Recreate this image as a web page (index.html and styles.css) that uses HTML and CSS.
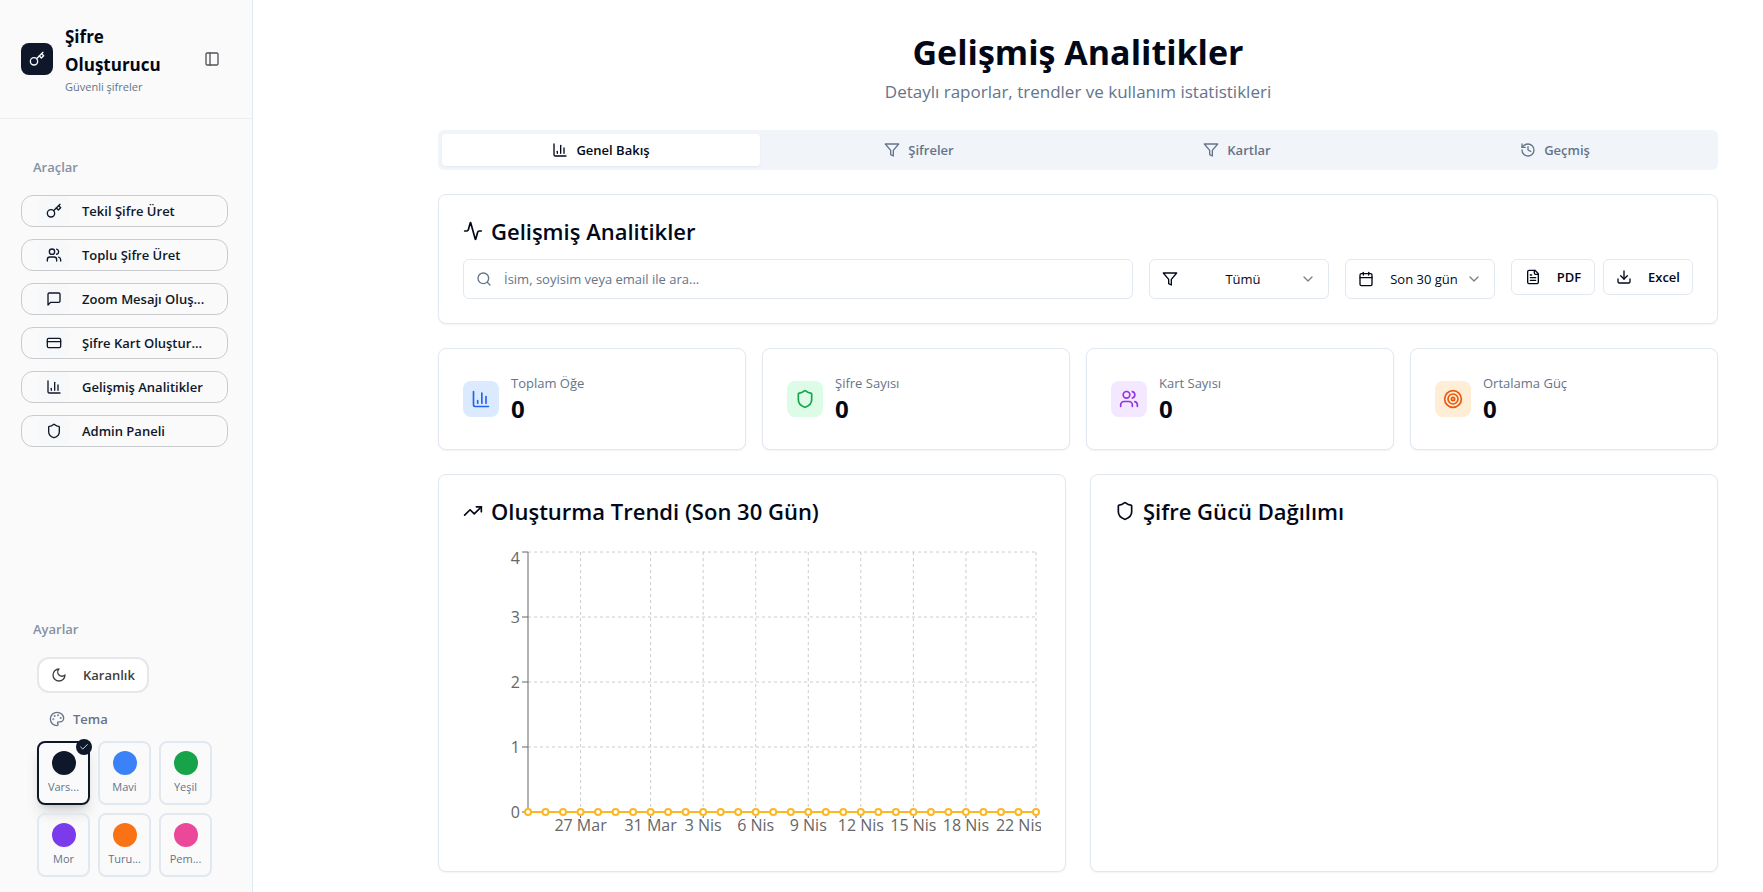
FILE: index.html
```html
<!DOCTYPE html>
<html lang="tr">
  <head>
    <meta charset="UTF-8" />
    <meta name="viewport" content="width=device-width, initial-scale=1.0" />
    <title>Gelişmiş Analitikler</title>
    <link rel="stylesheet" href="styles.css">
  </head>
  <body>
    <!-- Icon set -->
    <svg class="icon-set" aria-hidden="true">
      <symbol id="i-key" viewBox="0 0 24 24"><circle cx="7.5" cy="15.5" r="5.5" /><path d="m21 2-9.6 9.6" /><path d="m15.5 7.5 3 3L22 7l-3-3" /></symbol>
      <symbol id="i-panel" viewBox="0 0 24 24"><rect width="18" height="18" x="3" y="3" rx="2" /><path d="M9 3v18" /></symbol>
      <symbol id="i-users" viewBox="0 0 24 24"><path d="M16 21v-2a4 4 0 0 0-4-4H6a4 4 0 0 0-4 4v2" /><circle cx="9" cy="7" r="4" /><path d="M22 21v-2a4 4 0 0 0-3-3.87" /><path d="M16 3.13a4 4 0 0 1 0 7.75" /></symbol>
      <symbol id="i-message" viewBox="0 0 24 24"><path d="M21 15a2 2 0 0 1-2 2H7l-4 4V5a2 2 0 0 1 2-2h14a2 2 0 0 1 2 2z" /></symbol>
      <symbol id="i-card" viewBox="0 0 24 24"><rect width="20" height="14" x="2" y="5" rx="2" /><path d="M2 10h20" /></symbol>
      <symbol id="i-chart" viewBox="0 0 24 24"><path d="M3 3v16a2 2 0 0 0 2 2h16" /><path d="M18 17V9" /><path d="M13 17V5" /><path d="M8 17v-3" /></symbol>
      <symbol id="i-shield" viewBox="0 0 24 24"><path d="M20 13c0 5-3.5 7.5-7.66 8.95a1 1 0 0 1-.67-.01C7.5 20.5 4 18 4 13V6a1 1 0 0 1 1-1c2 0 4.5-1.2 6.24-2.72a1.17 1.17 0 0 1 1.52 0C14.51 3.81 17 5 19 5a1 1 0 0 1 1 1z" /></symbol>
      <symbol id="i-moon" viewBox="0 0 24 24"><path d="M12 3a6 6 0 0 0 9 9 9 9 0 1 1-9-9Z" /></symbol>
      <symbol id="i-palette" viewBox="0 0 24 24"><circle cx="13.5" cy="6.5" r=".5" /><circle cx="17.5" cy="10.5" r=".5" /><circle cx="8.5" cy="7.5" r=".5" /><circle cx="6.5" cy="12.5" r=".5" /><path d="M12 2C6.5 2 2 6.5 2 12s4.5 10 10 10c.926 0 1.648-.746 1.648-1.688 0-.437-.18-.835-.437-1.125-.29-.289-.438-.652-.438-1.125a1.64 1.64 0 0 1 1.668-1.668h1.996c3.051 0 5.555-2.503 5.555-5.554C21.965 6.012 17.461 2 12 2z" /></symbol>
      <symbol id="i-check" viewBox="0 0 24 24"><path d="M20 6 9 17l-5-5" /></symbol>
      <symbol id="i-filter" viewBox="0 0 24 24"><path d="M22 3H2l8 9.46V19l4 2v-8.54L22 3z" /></symbol>
      <symbol id="i-history" viewBox="0 0 24 24"><path d="M3 12a9 9 0 1 0 9-9 9.75 9.75 0 0 0-6.74 2.74L3 8" /><path d="M3 3v5h5" /><path d="M12 7v5l4 2" /></symbol>
      <symbol id="i-activity" viewBox="0 0 24 24"><path d="M22 12h-2.48a2 2 0 0 0-1.93 1.46l-2.35 8.36a.25.25 0 0 1-.48 0L9.24 2.18a.25.25 0 0 0-.48 0l-2.35 8.36A2 2 0 0 1 4.49 12H2" /></symbol>
      <symbol id="i-search" viewBox="0 0 24 24"><circle cx="11" cy="11" r="8" /><path d="m21 21-4.3-4.3" /></symbol>
      <symbol id="i-calendar" viewBox="0 0 24 24"><path d="M8 2v4" /><path d="M16 2v4" /><rect width="18" height="18" x="3" y="4" rx="2" /><path d="M3 10h18" /></symbol>
      <symbol id="i-chevron" viewBox="0 0 24 24"><path d="m6 9 6 6 6-6" /></symbol>
      <symbol id="i-file" viewBox="0 0 24 24"><path d="M15 2H6a2 2 0 0 0-2 2v16a2 2 0 0 0 2 2h12a2 2 0 0 0 2-2V7Z" /><path d="M14 2v4a2 2 0 0 0 2 2h4" /><path d="M10 9H8" /><path d="M16 13H8" /><path d="M16 17H8" /></symbol>
      <symbol id="i-download" viewBox="0 0 24 24"><path d="M21 15v4a2 2 0 0 1-2 2H5a2 2 0 0 1-2-2v-4" /><path d="m7 10 5 5 5-5" /><path d="M12 15V3" /></symbol>
      <symbol id="i-target" viewBox="0 0 24 24"><circle cx="12" cy="12" r="10" /><circle cx="12" cy="12" r="6" /><circle cx="12" cy="12" r="2" /></symbol>
      <symbol id="i-trend" viewBox="0 0 24 24"><path d="m22 7-8.5 8.5-5-5L2 17" /><path d="M16 7h6v6" /></symbol>
    </svg>

    <div class="layout">
      <aside class="sidebar">
        <header class="sidebar-header">
          <div class="logo"><svg class="icon"><use href="#i-key" /></svg></div>
          <div class="brand">
            <h2>Şifre Oluşturucu</h2>
            <p>Güvenli şifreler</p>
          </div>
          <button class="toggle" aria-label="Menüyü daralt"><svg class="icon"><use href="#i-panel" /></svg></button>
        </header>

        <nav class="tools">
          <h3 class="group-label">Araçlar</h3>
          <button class="tool"><span class="tool-icon"><svg class="icon"><use href="#i-key" /></svg></span>Tekil Şifre Üret</button>
          <button class="tool"><span class="tool-icon"><svg class="icon"><use href="#i-users" /></svg></span>Toplu Şifre Üret</button>
          <button class="tool"><span class="tool-icon"><svg class="icon"><use href="#i-message" /></svg></span>Zoom Mesajı Oluş...</button>
          <button class="tool"><span class="tool-icon"><svg class="icon"><use href="#i-card" /></svg></span>Şifre Kart Oluştur...</button>
          <button class="tool"><span class="tool-icon"><svg class="icon"><use href="#i-chart" /></svg></span>Gelişmiş Analitikler</button>
          <button class="tool"><span class="tool-icon"><svg class="icon"><use href="#i-shield" /></svg></span>Admin Paneli</button>
        </nav>

        <section class="settings">
          <h3 class="group-label">Ayarlar</h3>
          <div class="settings-body">
            <button class="dark-mode"><svg class="icon"><use href="#i-moon" /></svg>Karanlık</button>
            <h4 class="theme-label"><svg class="icon"><use href="#i-palette" /></svg>Tema</h4>
            <div class="themes">
              <button class="theme active"><span class="dot default"></span>Vars...<span class="badge"><svg class="icon"><use href="#i-check" /></svg></span></button>
              <button class="theme"><span class="dot blue"></span>Mavi</button>
              <button class="theme"><span class="dot green"></span>Yeşil</button>
              <button class="theme"><span class="dot purple"></span>Mor</button>
              <button class="theme"><span class="dot orange"></span>Turu...</button>
              <button class="theme"><span class="dot pink"></span>Pem...</button>
            </div>
          </div>
        </section>
      </aside>

      <main class="main">
        <div class="container">
          <header class="page-header">
            <h1>Gelişmiş Analitikler</h1>
            <p>Detaylı raporlar, trendler ve kullanım istatistikleri</p>
          </header>

          <div class="tabs" role="tablist">
            <button class="tab active" role="tab" aria-selected="true"><svg class="icon"><use href="#i-chart" /></svg>Genel Bakış</button>
            <button class="tab" role="tab"><svg class="icon"><use href="#i-filter" /></svg>Şifreler</button>
            <button class="tab" role="tab"><svg class="icon"><use href="#i-filter" /></svg>Kartlar</button>
            <button class="tab" role="tab"><svg class="icon"><use href="#i-history" /></svg>Geçmiş</button>
          </div>

          <section class="card filter-card">
            <h2 class="card-title"><svg class="icon"><use href="#i-activity" /></svg>Gelişmiş Analitikler</h2>
            <div class="filters">
              <label class="field search">
                <svg class="icon"><use href="#i-search" /></svg>
                <input type="text" placeholder="İsim, soyisim veya email ile ara..." aria-label="Ara" />
              </label>
              <label class="field type">
                <svg class="icon"><use href="#i-filter" /></svg>
                <select aria-label="Tür"><option>Tümü</option></select>
                <svg class="icon chevron"><use href="#i-chevron" /></svg>
              </label>
              <label class="field range">
                <svg class="icon"><use href="#i-calendar" /></svg>
                <select aria-label="Tarih aralığı"><option>Son 30 gün</option></select>
                <svg class="icon chevron"><use href="#i-chevron" /></svg>
              </label>
              <div class="exports">
                <button class="export"><svg class="icon"><use href="#i-file" /></svg>PDF</button>
                <button class="export"><svg class="icon"><use href="#i-download" /></svg>Excel</button>
              </div>
            </div>
          </section>

          <div class="stats">
            <div class="card stat">
              <div class="stat-icon blue"><svg class="icon"><use href="#i-chart" /></svg></div>
              <div><p class="stat-label">Toplam Öğe</p><p class="stat-value">0</p></div>
            </div>
            <div class="card stat">
              <div class="stat-icon green"><svg class="icon"><use href="#i-shield" /></svg></div>
              <div><p class="stat-label">Şifre Sayısı</p><p class="stat-value">0</p></div>
            </div>
            <div class="card stat">
              <div class="stat-icon purple"><svg class="icon"><use href="#i-users" /></svg></div>
              <div><p class="stat-label">Kart Sayısı</p><p class="stat-value">0</p></div>
            </div>
            <div class="card stat">
              <div class="stat-icon orange"><svg class="icon"><use href="#i-target" /></svg></div>
              <div><p class="stat-label">Ortalama Güç</p><p class="stat-value">0</p></div>
            </div>
          </div>

          <div class="charts">
            <section class="card chart-card">
              <h2 class="card-title"><svg class="icon"><use href="#i-trend" /></svg>Oluşturma Trendi (Son 30 Gün)</h2>
              <svg class="chart" id="trendChart" viewBox="0 0 578 300"></svg>
            </section>
            <section class="card chart-card">
              <h2 class="card-title"><svg class="icon"><use href="#i-shield" /></svg>Şifre Gücü Dağılımı</h2>
            </section>
          </div>
        </div>
      </main>
    </div>

    <script>
      const chart = document.getElementById("trendChart");
      const values = new Array(30).fill(0);
      const maxValue = 4;
      const left = 65;
      const right = 573;
      const top_ = 5;
      const bottom = 265;

      // day index -> label
      const labels = {
        3: "27 Mar",
        7: "31 Mar",
        10: "3 Nis",
        13: "6 Nis",
        16: "9 Nis",
        19: "12 Nis",
        22: "15 Nis",
        25: "18 Nis",
        29: "22 Nis",
      };

      const getX = (i) => left + ((right - left) * i) / (values.length - 1);
      const getY = (v) => bottom - ((bottom - top_) * v) / maxValue;

      function add(name, attrs, text) {
        const el = document.createElementNS("http://www.w3.org/2000/svg", name);
        for (const key in attrs) el.setAttribute(key, attrs[key]);
        if (text !== undefined) el.textContent = text;
        chart.appendChild(el);
      }

      function addLine(x1, y1, x2, y2, className) {
        add("line", { x1, y1, x2, y2, class: className });
      }

      for (let v = 0; v <= maxValue; v++) {
        const y = getY(v);
        addLine(left, y, right, y, "grid");
        addLine(left - 6, y, left, y, "axis");
        // keep the top label inside the chart
        const labelY = Math.max(y, 11) + 6;
        add("text", { x: left - 8, y: labelY, class: "tick-y" }, v);
      }

      for (const i in labels) {
        const x = getX(i);
        addLine(x, top_, x, bottom, "grid");
        addLine(x, bottom, x, bottom + 6, "axis");
        add("text", { x: Math.min(x, 556), y: bottom + 19, class: "tick-x" }, labels[i]);
      }

      addLine(left, top_, left, bottom, "axis");
      addLine(left, bottom, right, bottom, "axis");

      add("polyline", {
        points: values.map((v, i) => `${getX(i)},${getY(v)}`).join(" "),
        class: "series",
      });
      values.forEach((v, i) => {
        add("circle", { cx: getX(i), cy: getY(v), r: 3, class: "point" });
      });
    </script>
  </body>
</html>
```
FILE: styles.css
```css
* {
  box-sizing: border-box;
  margin: 0;
  padding: 0;
}
body {
  font-family: "Open Sans", "Noto Sans", sans-serif;
  font-size: 13px;
  line-height: 20px;
  background-color: white;
  color: #020817;
}
button,
input,
select {
  font: inherit;
  color: inherit;
  background: none;
  border: none;
}
button {
  cursor: pointer;
}
.icon-set {
  display: none;
}
.icon {
  width: 16px;
  height: 16px;
  flex-shrink: 0;
  fill: none;
  stroke: currentColor;
  stroke-width: 2;
  stroke-linecap: round;
  stroke-linejoin: round;
}
.layout {
  display: flex;
  min-height: 100vh;
}

/* Sidebar */
.sidebar {
  display: flex;
  flex-direction: column;
  width: 253px;
  flex-shrink: 0;
  background-color: #fafafa;
  border-right: 1px solid #e2e8f0;
}
.sidebar-header {
  display: flex;
  align-items: center;
  gap: 12px;
  padding: 23px 32px 23px 21px;
  border-bottom: 1px solid #eeeff1;
}
.logo {
  display: flex;
  align-items: center;
  justify-content: center;
  width: 32px;
  height: 32px;
  flex-shrink: 0;
  border-radius: 8px;
  background-color: #0f172a;
  color: #f8fafc;
}
.brand {
  flex: 1;
}
.brand h2 {
  font-size: 17px;
  line-height: 28px;
  font-weight: 700;
}
.brand p {
  font-size: 11px;
  line-height: 16px;
  color: #64748b;
}
.toggle {
  display: flex;
  color: #52525b;
}
.group-label {
  padding: 0 12px;
  font-size: 13px;
  font-weight: 600;
  color: #8491a3;
}
.tools {
  display: flex;
  flex-direction: column;
  gap: 12px;
  padding: 38px 24px 24px 21px;
}
.tools .group-label {
  margin-bottom: 6px;
}
.tool {
  display: flex;
  align-items: center;
  gap: 12px;
  height: 32px;
  padding: 0 16px;
  border: 1px solid #c9cacd;
  border-radius: 12px;
  font-weight: 600;
  color: #0f172a;
  white-space: nowrap;
}
.tool-icon {
  display: flex;
  align-items: center;
  justify-content: center;
  width: 32px;
  height: 30px;
  flex-shrink: 0;
  border-radius: 8px;
  background-color: #f6f8fa;
}
.settings {
  margin-top: auto;
  padding: 0 24px 15px 21px;
}
.settings-body {
  display: flex;
  flex-direction: column;
  align-items: flex-start;
  padding: 18px 16px 0;
}
.dark-mode {
  display: flex;
  align-items: center;
  gap: 16px;
  height: 36px;
  padding: 0 12px;
  border: 2px solid #e5e7eb;
  border-radius: 12px;
  background-color: white;
  font-weight: 600;
  color: #404040;
}
.theme-label {
  display: flex;
  align-items: center;
  gap: 8px;
  margin: 16px 0 12px;
  padding-left: 12px;
  font-size: 13px;
  font-weight: 600;
  color: #64748b;
}
.themes {
  display: grid;
  grid-template-columns: repeat(3, 53px);
  gap: 8px;
}
.theme {
  position: relative;
  display: flex;
  flex-direction: column;
  align-items: center;
  gap: 4px;
  height: 64px;
  padding-top: 8px;
  border: 2px solid #e2e8f0;
  border-radius: 8px;
  font-size: 11px;
  line-height: 16px;
  color: #64748b;
}
.theme.active {
  border-color: #0f172a;
  box-shadow: 0 10px 15px -3px rgba(0, 0, 0, 0.15), 0 4px 6px -4px rgba(0, 0, 0, 0.15);
}
.dot {
  width: 24px;
  height: 24px;
  flex-shrink: 0;
  border-radius: 50%;
}
.dot.default {
  background-color: #0f172a;
}
.dot.blue {
  background-color: #3b82f6;
}
.dot.green {
  background-color: #16a34a;
}
.dot.purple {
  background-color: #7c3aed;
}
.dot.orange {
  background-color: #f97316;
}
.dot.pink {
  background-color: #ec4899;
}
.badge {
  position: absolute;
  top: -4px;
  right: -4px;
  display: flex;
  align-items: center;
  justify-content: center;
  width: 16px;
  height: 16px;
  border-radius: 50%;
  background-color: #0f172a;
  color: white;
}
.badge .icon {
  width: 10px;
  height: 10px;
}

/* Page */
.main {
  flex: 1;
  min-width: 0;
  margin-left: 140px;
  padding: 32px 24px 16px;
}
.container {
  display: flex;
  flex-direction: column;
  gap: 24px;
  max-width: 1280px;
  margin: 0 auto;
}
.page-header {
  text-align: center;
}
.page-header h1 {
  margin-bottom: 6px;
  font-size: 34px;
  line-height: 40px;
  font-weight: 700;
}
.page-header p {
  font-size: 17px;
  line-height: 28px;
  color: #64748b;
}
.tabs {
  display: grid;
  grid-template-columns: repeat(4, 1fr);
  height: 40px;
  padding: 4px;
  border-radius: 6px;
  background-color: #f1f5f9;
}
.tab {
  display: flex;
  align-items: center;
  justify-content: center;
  gap: 8px;
  border-radius: 4px;
  font-weight: 600;
  color: #64748b;
}
.tab.active {
  background-color: white;
  color: #020817;
  box-shadow: 0 1px 2px rgba(0, 0, 0, 0.05);
}
.card {
  padding: 24px;
  border: 1px solid #e2e8f0;
  border-radius: 8px;
  background-color: white;
  box-shadow: 0 1px 2px rgba(0, 0, 0, 0.05);
}
.card-title {
  display: flex;
  align-items: center;
  gap: 8px;
  font-size: 22px;
  line-height: 24px;
  font-weight: 600;
}
.card-title .icon {
  width: 20px;
  height: 20px;
}
.filters {
  display: flex;
  align-items: flex-start;
  gap: 16px;
  margin-top: 16px;
}
.field {
  display: flex;
  align-items: center;
  height: 40px;
  padding: 0 12px;
  border: 1px solid #e2e8f0;
  border-radius: 6px;
}
.field input,
.field select {
  flex: 1;
  min-width: 0;
  height: 100%;
  outline: none;
}
.field select {
  appearance: none;
  padding-left: 8px;
  text-align: center;
  text-align-last: center;
}
.field .chevron {
  opacity: 0.5;
  pointer-events: none;
}
.search {
  flex: 1;
  gap: 12px;
}
.search .icon,
.search input::placeholder {
  color: #64748b;
  opacity: 1;
}
.type {
  width: 180px;
}
.range {
  width: 150px;
}
.exports {
  display: flex;
  gap: 8px;
}
.export {
  display: flex;
  align-items: center;
  justify-content: center;
  gap: 16px;
  min-width: 84px;
  height: 36px;
  padding: 0 12px;
  border: 1px solid #e2e8f0;
  border-radius: 6px;
  font-weight: 600;
}
.stats {
  display: grid;
  grid-template-columns: repeat(4, 1fr);
  gap: 16px;
}
.stat {
  display: flex;
  align-items: center;
  gap: 12px;
}
.stat-icon {
  display: flex;
  padding: 8px;
  border-radius: 8px;
}
.stat-icon .icon {
  width: 20px;
  height: 20px;
}
.stat-icon.blue {
  background-color: #dbeafe;
  color: #2563eb;
}
.stat-icon.green {
  background-color: #dcfce7;
  color: #16a34a;
}
.stat-icon.purple {
  background-color: #f3e8ff;
  color: #9333ea;
}
.stat-icon.orange {
  background-color: #ffedd5;
  color: #ea580c;
}
.stat-label {
  color: #64748b;
}
.stat-value {
  font-size: 24px;
  line-height: 32px;
  font-weight: 700;
}
.charts {
  display: grid;
  grid-template-columns: repeat(2, 1fr);
  gap: 24px;
}

/* Trend chart */
.chart {
  display: block;
  width: 100%;
  margin-top: 24px;
}
.grid {
  stroke: #ccc;
  stroke-dasharray: 3 3;
}
.axis {
  stroke: #666;
}
.tick-x,
.tick-y {
  font-size: 16px;
  fill: #666;
}
.tick-x {
  text-anchor: middle;
}
.tick-y {
  text-anchor: end;
}
.series {
  fill: none;
  stroke: #fbb824;
  stroke-width: 2;
}
.point {
  fill: white;
  stroke: #fbb824;
  stroke-width: 2;
}
```
